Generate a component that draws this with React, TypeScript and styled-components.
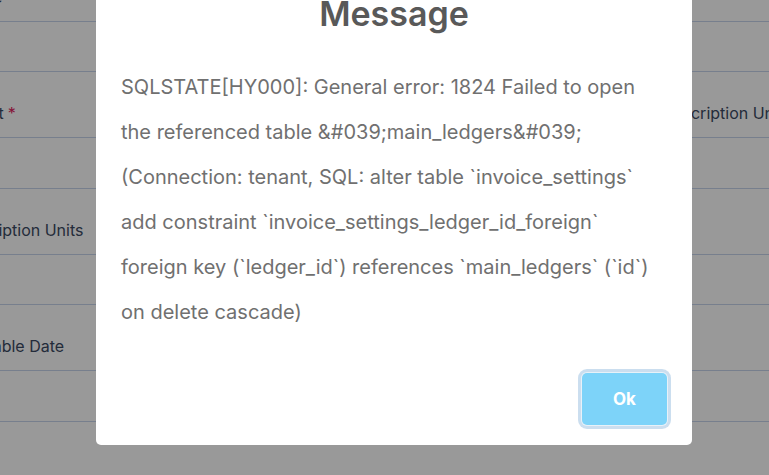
import React from 'react';
import styled, { createGlobalStyle } from 'styled-components';

const GlobalStyle = createGlobalStyle`
  html, body {
    margin: 0;
    padding: 0;
    background: #ffffff;
    overflow: hidden;
  }
  body {
    font-family: Inter, "Noto Sans", sans-serif;
  }
`;

// page behind the dialog (a settings form, shifted like the cropped screenshot)
const Page = styled.div`
  margin: -44px 0 0 -55px;
  width: 1420px;
`;

const Row = styled.div<{ $h: number }>`
  display: grid;
  grid-template-columns: 708px 708px;
  height: ${p => p.$h}px;
  box-sizing: border-box;
  border-bottom: 1px solid #c6d4ec;
`;

const Label = styled.div`
  padding-top: 31px;
  font-size: 16px;
  line-height: 20px;
  color: #3b4a63;
  white-space: nowrap;
`;

const Required = styled.span`
  color: #e0245e;
  margin-left: 4px;
`;

const Overlay = styled.div`
  position: fixed;
  inset: 0;
  background: rgba(0, 0, 0, 0.4);
  display: flex;
  justify-content: center;
  align-items: flex-end;
  padding: 0 0 30px 19px;
`;

const Dialog = styled.div`
  width: 596px;
  box-sizing: border-box;
  background: #ffffff;
  border-radius: 5px;
  padding: 20px 25px 20px;
  display: flex;
  flex-direction: column;
`;

const Title = styled.h2`
  margin: 0;
  text-align: center;
  font-size: 34px;
  line-height: 1.2;
  font-weight: 600;
  color: #595959;
`;

const Body = styled.div`
  margin-top: 30px;
  font-size: 20px;
  line-height: 45px;
  color: #707070;
  white-space: nowrap;
`;

const Actions = styled.div`
  margin-top: 38px;
  display: flex;
  justify-content: flex-end;
`;

const OkButton = styled.button`
  width: 85px;
  height: 52px;
  border: none;
  border-radius: 5px;
  background: #7dd3f9;
  color: #ffffff;
  font-family: Inter, "Noto Sans", sans-serif;
  font-size: 17px;
  font-weight: 700;
  box-shadow: 0 0 0 1px #e8f1f8, 0 0 0 4px rgba(160, 195, 225, 0.55);
  cursor: pointer;
`;

const rows = [
  { h: 66, left: 'Service', right: '' },
  { h: 50, left: '', right: '' },
  { h: 66, left: 'Amount', req: true, right: 'Subscription Units' },
  { h: 51, left: '', right: '' },
  { h: 66, left: 'Subscription Units', right: 'Tax' },
  { h: 50, left: '', right: '' },
  { h: 66, left: 'Applicable Date', right: '' },
  { h: 51, left: '', right: '' },
  { h: 66, left: 'Status', right: '' },
];

const lines = [
  'SQLSTATE[HY000]: General error: 1824 Failed to open',
  'the referenced table &#039;main_ledgers&#039;',
  '(Connection: tenant, SQL: alter table `invoice_settings`',
  'add constraint `invoice_settings_ledger_id_foreign`',
  'foreign key (`ledger_id`) references `main_ledgers` (`id`)',
  'on delete cascade)',
];

const App: React.FC = () => {
  return (
    <>
      <GlobalStyle />
      <Page>
        {rows.map((r, i) => (
          <Row key={i} $h={r.h}>
            <Label>
              {r.left}
              {r.req && <Required>*</Required>}
            </Label>
            <Label>{r.right}</Label>
          </Row>
        ))}
      </Page>

      <Overlay>
        <Dialog>
          <Title>Message</Title>
          <Body>
            {lines.map((l, i) => (
              <div key={i}>{l}</div>
            ))}
          </Body>
          <Actions>
            <OkButton>Ok</OkButton>
          </Actions>
        </Dialog>
      </Overlay>
    </>
  );
};

export default App;
